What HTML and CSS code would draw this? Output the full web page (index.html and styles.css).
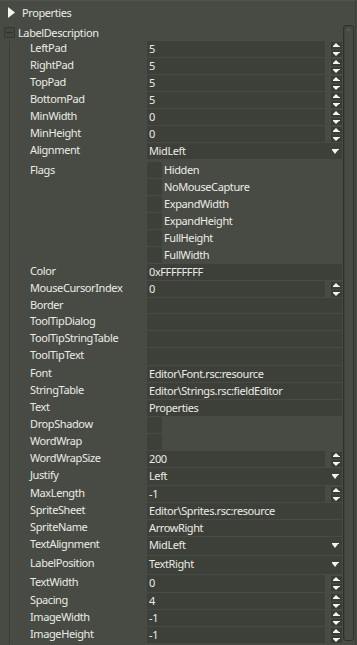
FILE: index.html
```html
<!DOCTYPE html>
<html lang="en">
<head>
    <meta charset="UTF-8">
    <meta name="viewport" content="width=device-width, initial-scale=1.0">
    <title>Properties</title>
    <link rel="stylesheet" href="styles.css">
</head>
<body>

<div class="window">
    <div class="header">
        <svg class="expander" width="8" height="11" viewBox="0 0 8 11"><polygon points="0,0 7,5.5 0,11" fill="#f4f4f0"/></svg>
        <span>Properties</span>
    </div>

    <div class="content">
        <div class="tree">
            <div class="group-title"><span class="collapse"></span>LabelDescription</div>
            <div class="group-rows">
                <div class="row"><div class="label">LeftPad</div><div class="value">5</div><div class="spin"><span class="up"></span><span class="down"></span></div></div>
                <div class="row"><div class="label">RightPad</div><div class="value">5</div><div class="spin"><span class="up"></span><span class="down"></span></div></div>
                <div class="row"><div class="label">TopPad</div><div class="value">5</div><div class="spin"><span class="up"></span><span class="down"></span></div></div>
                <div class="row"><div class="label">BottomPad</div><div class="value">5</div><div class="spin"><span class="up"></span><span class="down"></span></div></div>
                <div class="row"><div class="label">MinWidth</div><div class="value">0</div><div class="spin"><span class="up"></span><span class="down"></span></div></div>
                <div class="row"><div class="label">MinHeight</div><div class="value">0</div><div class="spin"><span class="up"></span><span class="down"></span></div></div>
                <div class="row"><div class="label">Alignment</div><div class="value select">MidLeft<span class="arrow"></span></div></div>

                <div class="row flags">
                    <div class="label">Flags</div>
                    <div class="flag-list">
                        <div class="flag"><span class="check"></span>Hidden</div>
                        <div class="flag"><span class="check"></span>NoMouseCapture</div>
                        <div class="flag"><span class="check"></span>ExpandWidth</div>
                        <div class="flag"><span class="check"></span>ExpandHeight</div>
                        <div class="flag"><span class="check"></span>FullHeight</div>
                        <div class="flag"><span class="check"></span>FullWidth</div>
                    </div>
                </div>

                <div class="row"><div class="label">Color</div><div class="value">0xFFFFFFFF</div></div>
                <div class="row"><div class="label">MouseCursorIndex</div><div class="value">0</div><div class="spin"><span class="up"></span><span class="down"></span></div></div>
                <div class="row short"><div class="label">Border</div><div class="value"></div></div>
                <div class="row"><div class="label">ToolTipDialog</div><div class="value"></div></div>
                <div class="row"><div class="label">ToolTipStringTable</div><div class="value"></div></div>
                <div class="row tall"><div class="label">ToolTipText</div><div class="value"></div></div>
                <div class="row"><div class="label">Font</div><div class="value">Editor\Font.rsc:resource</div></div>
                <div class="row"><div class="label">StringTable</div><div class="value">Editor\Strings.rsc:fieldEditor</div></div>
                <div class="row"><div class="label">Text</div><div class="value">Properties</div></div>
                <div class="row"><div class="label">DropShadow</div><div class="check-cell"><span class="check"></span></div></div>
                <div class="row"><div class="label">WordWrap</div><div class="check-cell"><span class="check"></span></div></div>
                <div class="row"><div class="label">WordWrapSize</div><div class="value">200</div><div class="spin"><span class="up"></span><span class="down"></span></div></div>
                <div class="row tall"><div class="label">Justify</div><div class="value select">Left<span class="arrow"></span></div></div>
                <div class="row"><div class="label">MaxLength</div><div class="value">-1</div><div class="spin"><span class="up"></span><span class="down"></span></div></div>
                <div class="row"><div class="label">SpriteSheet</div><div class="value">Editor\Sprites.rsc:resource</div></div>
                <div class="row"><div class="label">SpriteName</div><div class="value">ArrowRight</div></div>
                <div class="row taller"><div class="label">TextAlignment</div><div class="value select">MidLeft<span class="arrow"></span></div></div>
                <div class="row taller"><div class="label">LabelPosition</div><div class="value select">TextRight<span class="arrow"></span></div></div>
                <div class="row tall"><div class="label">TextWidth</div><div class="value">0</div><div class="spin"><span class="up"></span><span class="down"></span></div></div>
                <div class="row"><div class="label">Spacing</div><div class="value">4</div><div class="spin"><span class="up"></span><span class="down"></span></div></div>
                <div class="row"><div class="label">ImageWidth</div><div class="value">-1</div><div class="spin"><span class="up"></span><span class="down"></span></div></div>
                <div class="row"><div class="label">ImageHeight</div><div class="value">-1</div><div class="spin"><span class="up"></span><span class="down"></span></div></div>
            </div>
        </div>
        <div class="scrollbar"><div class="thumb"></div></div>
    </div>
</div>

</body>
</html>
```

FILE: styles.css
```css
body {
    margin: 0;
    padding: 0;
    background-color: #474b43;
    font-family: "Noto Sans", "DejaVu Sans", sans-serif;
    font-size: 11px;
    letter-spacing: -0.4px;
    color: #ebebe6;
    overflow: hidden;
}
.window {
    width: 356px;
    height: 645px;
    border-right: 1px solid #3c4039;
    border-top: 1px solid #4f534b;
    box-sizing: border-box;
    overflow: hidden;
}
.header {
    height: 23px;
    display: flex;
    align-items: center;
    padding-left: 8px;
    box-sizing: border-box;
}
.header .expander {
    margin-right: 6px;
}
.content {
    display: flex;
}
.tree {
    width: 342px;
}
.group-title {
    height: 17px;
    display: flex;
    align-items: center;
    padding-left: 4px;
}
.collapse {
    width: 9px;
    height: 9px;
    border: 1px solid #353831;
    border-radius: 1px;
    background-color: #434740;
    margin-right: 3px;
    position: relative;
}
.collapse::after {
    content: "";
    position: absolute;
    left: 1px;
    right: 1px;
    top: 4px;
    height: 1px;
    background-color: #30332d;
}
.group-rows {
    margin-left: 9px;
    border-left: 1px solid #3a3d36;
}
.row {
    display: flex;
    height: 17px;
}
.row.short {
    height: 16px;
}
.row.tall {
    height: 18px;
}
.row.taller {
    height: 19px;
}
.label {
    width: 117px;
    padding-left: 20px;
    line-height: 14px;
    white-space: nowrap;
}
.value {
    flex: 1;
    height: calc(100% - 1px);
    background-color: #3c4038;
    padding-left: 2px;
    line-height: 15px;
    white-space: nowrap;
    overflow: hidden;
    position: relative;
}
.select .arrow {
    position: absolute;
    right: 3px;
    top: 6px;
    width: 7px;
    height: 5px;
    background: linear-gradient(#f4f4f0, #f4f4f0) top / 7px 1px no-repeat;
}
.select .arrow::after {
    content: "";
    position: absolute;
    left: 0;
    top: 1px;
    border-left: 3.5px solid transparent;
    border-right: 3.5px solid transparent;
    border-top: 4px solid #f4f4f0;
}
.spin {
    width: 11px;
    margin-left: 6px;
    padding-top: 1px;
    display: flex;
    flex-direction: column;
    gap: 1px;
}
.spin span {
    height: 7px;
    background-color: #393c35;
    position: relative;
}
.spin .up::before,
.spin .down::before {
    content: "";
    position: absolute;
    left: 2px;
    border-left: 3.5px solid transparent;
    border-right: 3.5px solid transparent;
}
.spin .up::before {
    top: 1px;
    border-bottom: 3px solid #f4f4f0;
}
.spin .down::before {
    top: 3px;
    border-top: 3px solid #f4f4f0;
}
.spin .up::after,
.spin .down::after {
    content: "";
    position: absolute;
    left: 2px;
    width: 7px;
    height: 1px;
    background-color: #f4f4f0;
}
.spin .up::after {
    top: 4px;
}
.spin .down::after {
    top: 2px;
}
.check {
    display: inline-block;
    width: 15px;
    height: 16px;
    background-color: #3c4038;
    border-radius: 2px;
    flex-shrink: 0;
}
.check-cell {
    flex: 1;
    display: flex;
}
.row.flags {
    height: auto;
    padding-top: 2px;
}
.flags .label {
    line-height: 15px;
}
.flag-list {
    flex: 1;
}
.flag {
    height: 17px;
    display: flex;
    align-items: flex-start;
    line-height: 15px;
}
.flag .check {
    margin-right: 2px;
}
.scrollbar {
    width: 9px;
    height: 614px;
    margin-top: 1px;
    margin-left: 1px;
    border: 1px solid #2e312b;
    border-radius: 3px;
    box-shadow: inset 1px 1px 0 #3f433b;
    position: relative;
}
.scrollbar .thumb {
    position: absolute;
    left: 3px;
    top: 3px;
    width: 3px;
    height: 2px;
    background-color: #565a51;
}
```
